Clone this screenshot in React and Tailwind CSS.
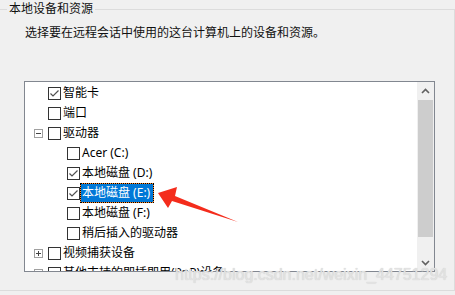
import React from "react";

const rows = [
  { level: 0, cb: true, label: "智能卡" },
  { level: 0, cb: false, label: "端口" },
  { level: 0, exp: "minus", cb: false, label: "驱动器" },
  { level: 1, cb: false, label: "Acer (C:)" },
  { level: 1, cb: true, label: "本地磁盘 (D:)" },
  { level: 1, cb: true, label: "本地磁盘 (E:)", selected: true },
  { level: 1, cb: false, label: "本地磁盘 (F:)" },
  { level: 1, cb: false, label: "稍后插入的驱动器" },
  { level: 0, exp: "plus", cb: false, label: "视频捕获设备" },
  { level: 0, exp: "plus", cb: false, label: "其他支持的即插即用(PnP)设备" },
];

function Expander({ type }) {
  return (
    <div className="w-[9px] h-[9px] border border-[#a0a0a0] bg-white flex items-center justify-center">
      <svg width="7" height="7" viewBox="0 0 7 7">
        <rect x="1" y="3" width="5" height="1" fill="#444" />
        {type === "plus" && <rect x="3" y="1" width="1" height="5" fill="#444" />}
      </svg>
    </div>
  );
}

function Checkbox({ checked }) {
  return (
    <div className="w-[13px] h-[13px] border border-[#333] bg-white shrink-0 flex items-center justify-center">
      {checked && (
        <svg width="11" height="11" viewBox="0 0 11 11">
          <path d="M1.5 5.5 L4 8 L9.5 2.5" fill="none" stroke="#505050" strokeWidth="1.2" />
        </svg>
      )}
    </div>
  );
}

function Row({ row }) {
  return (
    <div className={`h-[20px] flex items-center ${row.level === 0 ? "pl-[9px]" : "pl-[28px]"}`}>
      <div className="w-[9px] h-[9px] mr-[5px] shrink-0">{row.exp && <Expander type={row.exp} />}</div>
      <Checkbox checked={row.cb} />
      {row.selected ? (
        <div className="border border-dotted border-black bg-[#ff8a2a] h-[20px] flex">
          <div className="bg-[#0078d7] text-white h-full pl-[1px] pr-[3px] leading-[18px] whitespace-nowrap">
            {row.label}
          </div>
        </div>
      ) : (
        <span className="ml-[2px] whitespace-nowrap text-black leading-[18px]">{row.label}</span>
      )}
    </div>
  );
}

export default function App() {
  return (
    <div className="w-[455px] h-[295px] bg-[#f0f0f0] overflow-hidden relative font-['Noto_Sans','Noto_Sans_CJK_SC',sans-serif] text-[12px] text-[#111]">
      <div className="-ml-[2px] mt-[9px] w-[457px] h-[282px] border border-[#dcdcdc]">
        <div className="-mt-[10px] ml-[8px] h-[18px] leading-[18px]">
          <span className="bg-[#f0f0f0] px-[2px]">本地设备和资源</span>
        </div>
        <div className="mt-[6px] ml-[26px] h-[18px] leading-[18px]">
          选择要在远程会话中使用的这台计算机上的设备和资源。
        </div>
        <div className="mt-[39px] ml-[25px] w-[411px] h-[191px] border border-[#828790] bg-white flex">
          <div className="flex-1 overflow-hidden pt-[1px]">
            {rows.map((r, i) => (
              <Row key={i} row={r} />
            ))}
          </div>
          <div className="w-[17px] h-full bg-[#f0f0f0] flex flex-col">
            <div className="h-[17px] flex items-center justify-center">
              <svg width="9" height="6" viewBox="0 0 9 6">
                <path d="M1 5 L4.5 1.5 L8 5" fill="none" stroke="#606060" strokeWidth="1.6" />
              </svg>
            </div>
            <div className="mt-[1px] h-[137px] mx-[1px] bg-[#cdcdcd]" />
            <div className="flex-1" />
            <div className="h-[17px] flex items-center justify-center">
              <svg width="9" height="6" viewBox="0 0 9 6">
                <path d="M1 1 L4.5 4.5 L8 1" fill="none" stroke="#606060" strokeWidth="1.6" />
              </svg>
            </div>
          </div>
        </div>
      </div>

      <svg className="absolute left-0 top-0 pointer-events-none" width="455" height="295" viewBox="0 0 455 295">
        <polygon points="158,193 177,187 175,196 238,222 172,201 168,208" fill="#f42c1c" />
      </svg>

      <div className="absolute left-[175px] top-[266px] text-[16px] leading-[18px] font-['Liberation_Sans',Arial,sans-serif] text-[#e2e2e2] [text-shadow:0_0_1px_#c8c8c8] whitespace-nowrap pointer-events-none">
        https://blog.csdn.net/weixin_44751294
      </div>
    </div>
  );
}
